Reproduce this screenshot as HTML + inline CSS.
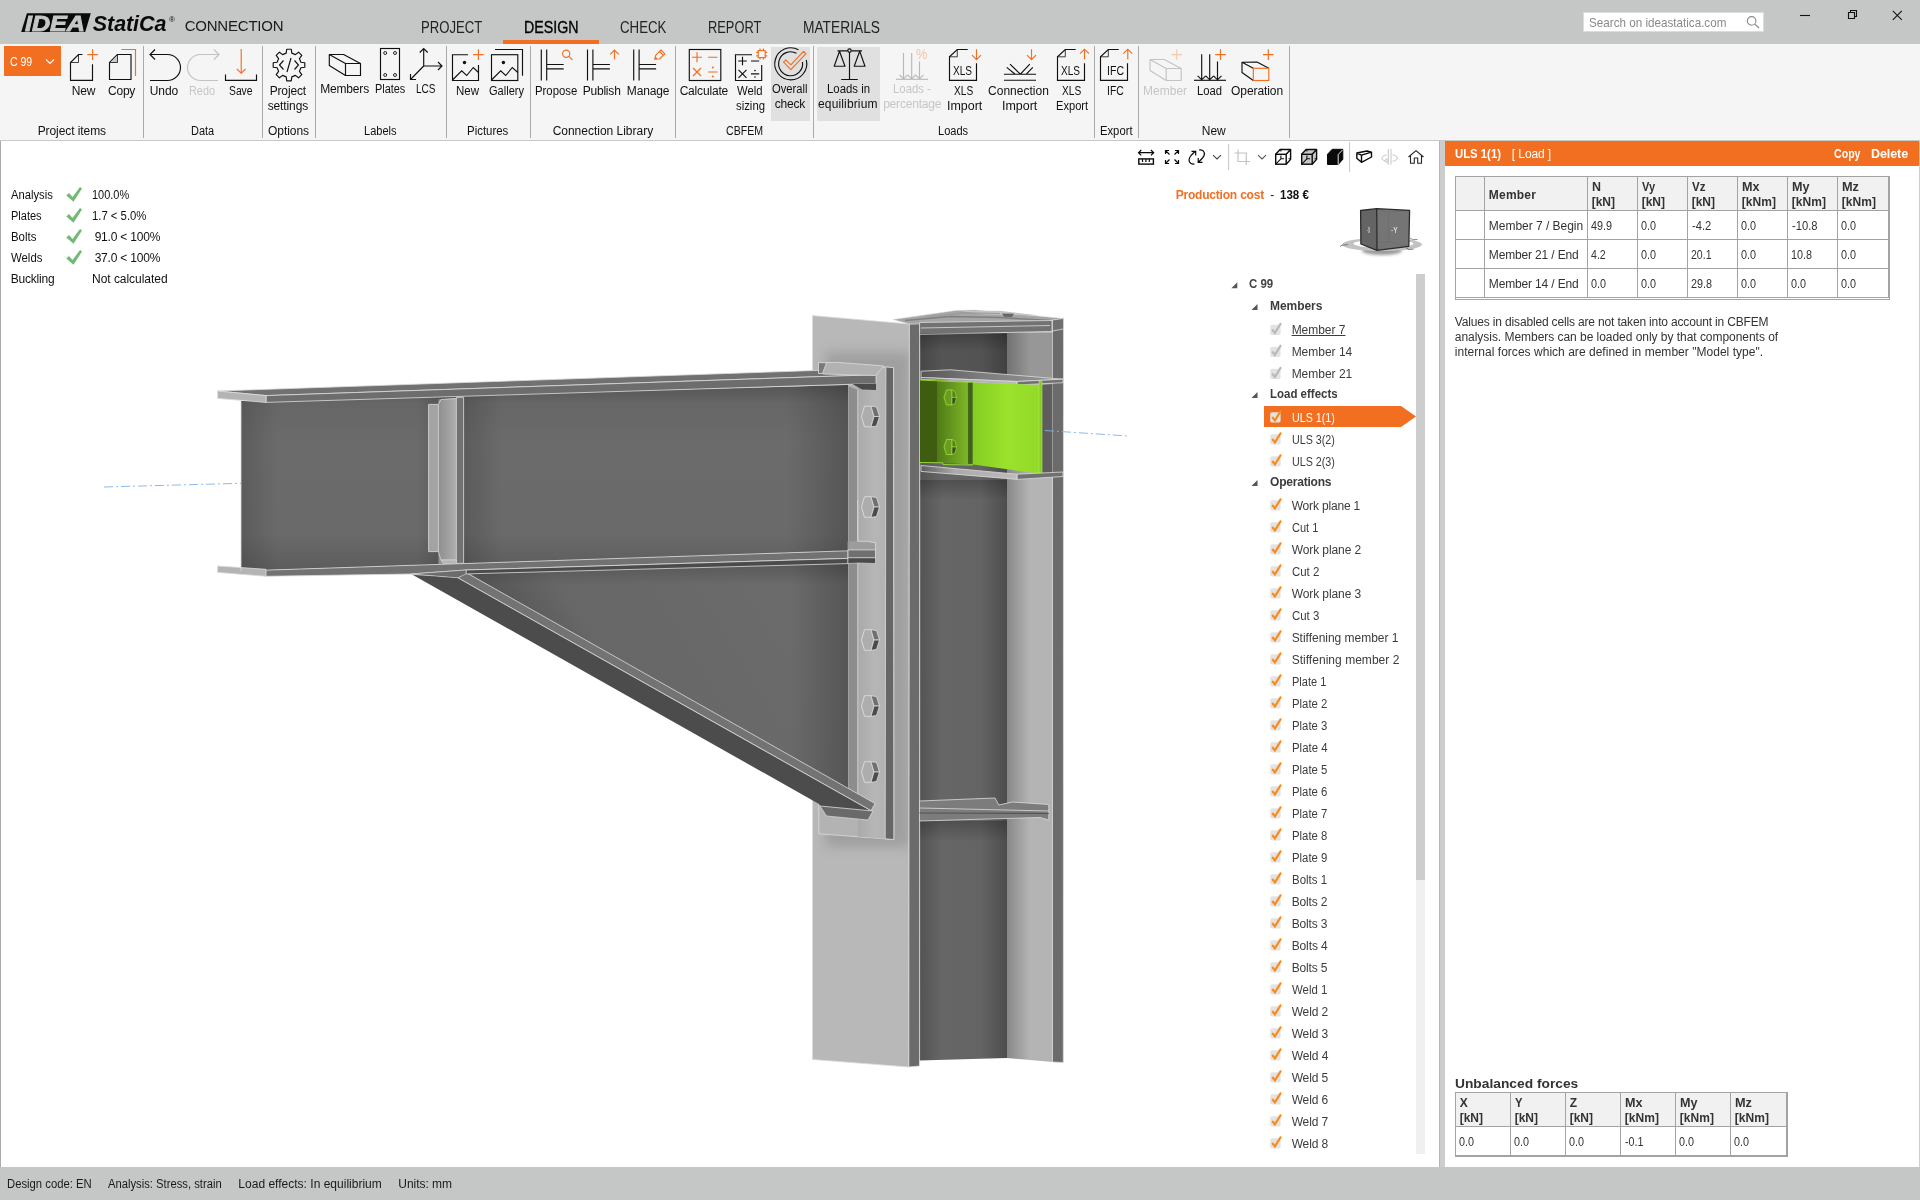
<!DOCTYPE html><html lang="en"><head><meta charset="utf-8"><title>IDEA StatiCa Connection</title><style>
*{box-sizing:border-box}
html,body{margin:0;padding:0}
body{width:1920px;height:1200px;overflow:hidden;position:relative;background:#fff;font-family:"Liberation Sans",sans-serif;font-size:12px;color:#1a1a1a}
.t{position:absolute;white-space:pre;display:block}
.abs{position:absolute}
.sep{position:absolute;width:1px;background:#a9a9a9;top:46px;height:92px}
svg{position:absolute;overflow:visible}
#app{position:absolute;left:0;top:0;width:1920px;height:1200px;overflow:hidden;will-change:transform}
</style></head><body><div id="app">
<div class="abs" style="left:0;top:0;width:1920px;height:44px;background:#c5c7c6"></div>
<svg style="left:0;top:0" width="300" height="44" viewBox="0 0 300 44"><polygon points="26.9,13.2 90.8,13.2 85.2,32 21.2,32" fill="#0a0a0a"/></svg>
<span class="t" style="left:25.32px;top:11.00px;font-size:21.5px;line-height:27px;transform:scaleX(1.1681);transform-origin:0 0;font-weight:700;color:#c5c7c6;font-style:italic;-webkit-text-stroke:0.9px #c5c7c6;">IDEA</span>
<span class="t" style="left:92.82px;top:11.00px;font-size:21.5px;line-height:27px;letter-spacing:-0.082px;font-weight:700;color:#0a0a0a;font-style:italic;">StatiCa</span>
<span class="t" style="left:169.06px;top:15.00px;font-size:8px;line-height:10px;color:#0a0a0a;">®</span>
<span class="t" style="left:184.68px;top:16.00px;font-size:15px;line-height:19px;letter-spacing:-0.213px;">CONNECTION</span>
<span class="t" style="left:420.62px;top:18.00px;font-size:16px;line-height:20px;transform:scaleX(0.8209);transform-origin:0 0;color:#222;">PROJECT</span>
<span class="t" style="left:523.52px;top:18.00px;font-size:16px;line-height:20px;transform:scaleX(0.8884);transform-origin:0 0;color:#000;-webkit-text-stroke:0.35px #000;">DESIGN</span>
<span class="t" style="left:619.62px;top:18.00px;font-size:16px;line-height:20px;transform:scaleX(0.8285);transform-origin:0 0;color:#222;">CHECK</span>
<span class="t" style="left:708.12px;top:18.00px;font-size:16px;line-height:20px;transform:scaleX(0.8024);transform-origin:0 0;color:#222;">REPORT</span>
<span class="t" style="left:803.42px;top:18.00px;font-size:16px;line-height:20px;transform:scaleX(0.8601);transform-origin:0 0;color:#222;">MATERIALS</span>
<div class="abs" style="left:503px;top:40px;width:96px;height:4px;background:#f26e21"></div>
<div class="abs" style="left:1583px;top:12px;width:181px;height:20px;background:#fff;border:1px solid #dcdcdc"></div>
<span class="t" style="left:1588.59px;top:15.00px;font-size:13px;line-height:16px;transform:scaleX(0.8969);transform-origin:0 0;color:#8a8a8a;">Search on ideastatica.com</span>
<svg style="left:1745px;top:14px" width="16" height="16" viewBox="0 0 16 16"><circle cx="6.6" cy="6.9" r="4.3" fill="none" stroke="#8a8a8a" stroke-width="1.1"/><path d="M9.8 10.1 L14 14" stroke="#8a8a8a" stroke-width="1.2" fill="none"/></svg>
<svg style="left:1790px;top:0" width="130" height="44" viewBox="0 0 130 44"><g stroke="#111" stroke-width="1.1" fill="none"><path d="M10 15.5H20"/><path d="M58.5 12.5h6v6h-6z M60.5 12.5v-2h6v6h-2"/><path d="M102.8 10.8l9 9M111.8 10.8l-9 9"/></g></svg>
<div class="abs" style="left:0;top:44px;width:1920px;height:97px;background:#f5f5f5;border-bottom:1px solid #c9c9c9"></div>
<div class="abs" style="left:771px;top:47px;width:39px;height:74px;background:#e0e0e0"></div>
<div class="abs" style="left:817px;top:47px;width:63px;height:74px;background:#e0e0e0"></div>
<div class="sep" style="left:143px"></div>
<div class="sep" style="left:262px"></div>
<div class="sep" style="left:315px"></div>
<div class="sep" style="left:446px"></div>
<div class="sep" style="left:530px"></div>
<div class="sep" style="left:675px"></div>
<div class="sep" style="left:813px"></div>
<div class="sep" style="left:1094px"></div>
<div class="sep" style="left:1138px"></div>
<div class="sep" style="left:1289px"></div>
<div class="abs" style="left:4px;top:46px;width:57px;height:30px;background:#f26e21"></div>
<span class="t" style="left:9.94px;top:55.00px;font-size:12px;line-height:15px;transform:scaleX(0.8758);transform-origin:0 0;color:#fff;">C 99</span>
<svg style="left:0;top:0" width="1300" height="141" viewBox="0 0 1300 141" fill="none" stroke-width="1.15"><path d="M46 59.5l4 4l4 -4" stroke="#fff"/><path d="M82.5 54.5H78.5L70.5 62.5V80.4H92.5V64.3" stroke="#111"/><path d="M78.5 54.5V62.5H70.5" stroke="#111" stroke-width="0.8"/><path d="M87.3 54.6H97.9M92.6 49.3V59.9" stroke="#f26e21"/><path d="M117.5 54.5L109.5 62.5V79.5H131V54.5Z" stroke="#111"/><path d="M117.5 54.5V62.5H109.5Z" stroke="#111" fill="#c8c8c8" stroke-width="0.8"/><path d="M121.5 49.5H135.5V76" stroke="#f26e21"/><path d="M150 54.5H167.5A13 13 0 0 1 167.5 80.5H150M155 49.5L150 54.5L155 59.5" stroke="#111"/><path d="M219 54.5H200.5A13 13 0 0 0 200.5 80.5H218M214 49.5L219 54.5L214 59.5" stroke="#c3c3c3"/><path d="M225.5 74.5V80.3H256.5V74.5" stroke="#111"/><path d="M241.2 49.0V73.3M236.9 69.0L241.2 73.3L245.5 69.0" stroke="#f26e21"/><path d="M286.2 53.1L286.7 49.2L291.3 49.2L291.8 53.1L295.4 54.6L298.6 52.2L301.8 55.4L299.4 58.6L300.9 62.2L304.8 62.7L304.8 67.3L300.9 67.8L299.4 71.4L301.8 74.6L298.6 77.8L295.4 75.4L291.8 76.9L291.3 80.8L286.7 80.8L286.2 76.9L282.6 75.4L279.4 77.8L276.2 74.6L278.6 71.4L277.1 67.8L273.2 67.3L273.2 62.7L277.1 62.2L278.6 58.6L276.2 55.4L279.4 52.2L282.6 54.6Z" stroke="#111" stroke-linejoin="round"/><path d="M283.5 60.5L279.5 65L283.5 69.5M294.5 60.5L298.5 65L294.5 69.5M291 58L287 72" stroke="#111"/><path d="M329.3 54.5H343.6L360.5 63.5H345.5ZM329.3 54.5V65.5L345.5 75.5" stroke="#111" stroke-linejoin="round"/><path d="M345.5 63.5V75.5H360.5V63.5" stroke="#111" stroke-linejoin="round"/><rect x="380.5" y="48.5" width="19" height="31" stroke="#111"/><circle cx="385.2" cy="53.0" r="1.5" stroke="#111" stroke-width="0.9"/><circle cx="395.0" cy="53.0" r="1.5" stroke="#111" stroke-width="0.9"/><circle cx="385.2" cy="75.0" r="1.5" stroke="#111" stroke-width="0.9"/><circle cx="395.0" cy="75.0" r="1.5" stroke="#111" stroke-width="0.9"/><path d="M423.7 66V48.5M419.7 52.5L423.7 48.5L427.7 52.5M423.7 66H442M438 62L442 66L438 70M423.7 66L410.5 79.5M410.5 74V79.5H416" stroke="#111"/><path d="M468 54.7H452.5V80.5H478.5V65" stroke="#111"/><circle cx="464.5" cy="62.5" r="1.7" fill="#111" stroke="none"/><path d="M452.5 80L461.7 70.8L466.7 75.5L473.3 67.5L478.5 72.5" stroke="#111"/><path d="M473.1 54.6H483.7M478.4 49.3V59.9" stroke="#f26e21"/><rect x="491.5" y="54.7" width="26.3" height="25.8" stroke="#111"/><path d="M495 49.5H522.5V75.8" stroke="#111"/><circle cx="503.4" cy="62.5" r="1.7" fill="#111" stroke="none"/><path d="M491.5 80L500.7 70.8L505.7 75.5L512.3 67.5L517.8 72.5" stroke="#111"/><path d="M541.3 49.5V80.5M546.7 49.5V80.5M546.7 64.5H563.7M546.7 68.8H563.7" stroke="#111"/><path d="M587.5 49.5V80.5M592.9 49.5V80.5M592.9 64.5H609.9M592.9 68.8H609.9" stroke="#111"/><path d="M633.7 49.5V80.5M639.1 49.5V80.5M639.1 64.5H656.1M639.1 68.8H656.1" stroke="#111"/><circle cx="566.2" cy="53.7" r="3.6" stroke="#f26e21"/><path d="M568.8 56.3L572.5 59.8" stroke="#f26e21"/><path d="M614.5 59.3V50.0M610.2 54.3L614.5 50.0L618.8 54.3" stroke="#f26e21"/><path d="M654.7 59.3L655.8 55.2L661 50L664.8 53.8L659.6 59L654.7 59.3ZM659.5 51.5L663.3 55.3" stroke="#f26e21" stroke-linejoin="round"/><path d="M654.7 59.3L655.5 56.5L657.8 58.8Z" fill="#f26e21" stroke="none"/><rect x="689.3" y="49.5" width="31.5" height="31" stroke="#111"/><path d="M692 57.2H702M697 52.2V62.2M708.1 57.2H717.5M693 68L701 76M701 68L693 76M708.1 72H717.5" stroke="#f26e21"/><circle cx="712.8" cy="67.6" r="1" fill="#f26e21" stroke="none"/><circle cx="712.8" cy="76.4" r="1" fill="#f26e21" stroke="none"/><path d="M752 54.7H735.5V80.5H761.7V65" stroke="#111"/><path d="M738.2 61H746.8M742.5 56.7V65.3M751 61H759.2M738.5 69.8L746.5 77.8M746.5 69.8L738.5 77.8M751 73.8H759.2" stroke="#111"/><circle cx="755" cy="70.6" r="0.8" fill="#111" stroke="none"/><circle cx="755" cy="77" r="0.8" fill="#111" stroke="none"/><rect x="758.2" y="50.6" width="7" height="7" stroke="#f26e21"/><path d="M760 50.6V48.6M763.4 50.6V48.6M760 57.6V59.6M763.4 57.6V59.6M758.2 52.4H756.2M758.2 55.8H756.2M765.2 52.4H767.2M765.2 55.8H767.2" stroke="#f26e21"/><path d="M798.5 49.8A16 16 0 1 0 806.3 60" stroke="#111"/><path d="M796.5 53.3A12 12 0 1 0 802.5 62" stroke="#111"/><path d="M783.5 62.2L785.8 59.9L790.8 64.9L803.5 51.3L806 53.6L790.9 69.6Z" stroke="#f26e21" stroke-linejoin="round"/><path d="M849.5 52.3V79.5M841.2 79.5H857.8M837.5 50.8H847.8M851.2 50.8H862M839.5 51.3L834.2 66.2H845L839.5 51.3M859.7 51.3L854.2 66.2H865L859.7 51.3" stroke="#111" stroke-linejoin="round"/><circle cx="849.5" cy="50.6" r="1.7" stroke="#111"/><path d="M896 79.3H928" stroke="#b8b8b8"/><path d="M903.5 53.1V78.8M899.5 74.8L903.5 78.8L907.5 74.8" stroke="#b8b8b8"/><path d="M911.7 53.1V78.8M907.7 74.8L911.7 78.8L915.7 74.8" stroke="#b8b8b8"/><path d="M919.5 61.6V78.8M915.5 74.8L919.5 78.8L923.5 74.8" stroke="#b8b8b8"/><path d="M967.7 49.5H957.3L949.5 56.8V80.3H976.5V63.3" stroke="#111"/><path d="M957.3 49.5V56.8H949.5" stroke="#111" stroke-width="0.8"/><path d="M976.5 49.2V59.6M972.0 55.1L976.5 59.6L981.0 55.1" stroke="#f26e21"/><path d="M1075.7 49.5H1065.3L1057.5 56.8V80.3H1084.5V63.3" stroke="#111"/><path d="M1065.3 49.5V56.8H1057.5" stroke="#111" stroke-width="0.8"/><path d="M1084.5 59.6V49.2M1080.0 53.7L1084.5 49.2L1089.0 53.7" stroke="#f26e21"/><path d="M1118.7 49.5H1108.3L1100.5 56.8V80.3H1127.5V63.3" stroke="#111"/><path d="M1108.3 49.5V56.8H1100.5" stroke="#111" stroke-width="0.8"/><path d="M1127.8 59.6V49.2M1123.3 53.7L1127.8 49.2L1132.3 53.7" stroke="#f26e21"/><path d="M1004 74.2H1036M1004 80.2H1036M1010 64.2L1020.4 74.2L1029.8 64.2M1006.7 67.4L1015.2 74.2M1032.8 67.4L1026.3 74.2" stroke="#111"/><path d="M1031.5 49.2V59.6M1027.0 55.1L1031.5 59.6L1036.0 55.1" stroke="#f26e21"/><path d="M1150.0 59.5H1164.3L1181.2 68.5H1166.2ZM1150.0 59.5V70.5L1166.2 80.5" stroke="#c3c3c3" stroke-linejoin="round"/><path d="M1166.2 68.5V80.5H1181.2V68.5" stroke="#c3c3c3" stroke-linejoin="round"/><path d="M1171.4 54.6H1182.0M1176.7 49.3V59.9" stroke="#f7c9ad"/><path d="M1194 80.3H1226" stroke="#111"/><path d="M1201.7 54.2V79.8M1197.7 75.8L1201.7 79.8L1205.7 75.8" stroke="#111"/><path d="M1209.7 54.2V79.8M1205.7 75.8L1209.7 79.8L1213.7 75.8" stroke="#111"/><path d="M1217.5 61.5V79.8M1213.5 75.8L1217.5 79.8L1221.5 75.8" stroke="#111"/><path d="M1215.2 54.6H1225.8M1220.5 49.3V59.9" stroke="#f26e21"/><path d="M1253.3 68.3L1242 62.3V72.5L1253.3 80.5M1242 62.3L1257 62L1268.8 68.3" stroke="#111" stroke-linejoin="round"/><rect x="1253.3" y="68.3" width="15.5" height="12.2" stroke="#f26e21"/><path d="M1263.0 54.6H1273.6M1268.3 49.3V59.9" stroke="#f26e21"/></svg>
<span class="t" style="left:915.80px;top:45.00px;font-size:14.5px;line-height:18px;transform:scaleX(0.8842);transform-origin:0 0;color:#f6c4a6;">%</span>
<span class="t" style="left:952.86px;top:62.00px;font-size:13.5px;line-height:17px;transform:scaleX(0.7446);transform-origin:0 0;color:#111;">XLS</span>
<span class="t" style="left:1060.86px;top:62.00px;font-size:13.5px;line-height:17px;transform:scaleX(0.7446);transform-origin:0 0;color:#111;">XLS</span>
<span class="t" style="left:1106.76px;top:62.00px;font-size:13.5px;line-height:17px;transform:scaleX(0.7817);transform-origin:0 0;color:#111;">IFC</span>
<span class="t" style="left:71.84px;top:84.00px;font-size:12px;line-height:15px;letter-spacing:-0.235px;color:#111;">New</span>
<span class="t" style="left:108.04px;top:84.00px;font-size:12px;line-height:15px;letter-spacing:-0.228px;color:#111;">Copy</span>
<span class="t" style="left:149.84px;top:84.00px;font-size:12px;line-height:15px;letter-spacing:-0.122px;color:#111;">Undo</span>
<span class="t" style="left:228.84px;top:84.00px;font-size:12px;line-height:15px;transform:scaleX(0.8592);transform-origin:0 0;color:#111;">Save</span>
<span class="t" style="left:269.64px;top:84.00px;font-size:12px;line-height:15px;letter-spacing:-0.135px;color:#111;">Project</span>
<span class="t" style="left:267.64px;top:99.00px;font-size:12px;line-height:15px;letter-spacing:-0.107px;color:#111;">settings</span>
<span class="t" style="left:320.14px;top:82.00px;font-size:12px;line-height:15px;letter-spacing:-0.159px;color:#111;">Members</span>
<span class="t" style="left:374.84px;top:82.00px;font-size:12px;line-height:15px;transform:scaleX(0.9085);transform-origin:0 0;color:#111;">Plates</span>
<span class="t" style="left:415.64px;top:82.00px;font-size:12px;line-height:15px;transform:scaleX(0.8353);transform-origin:0 0;color:#111;">LCS</span>
<span class="t" style="left:456.04px;top:84.00px;font-size:12px;line-height:15px;transform:scaleX(0.9581);transform-origin:0 0;color:#111;">New</span>
<span class="t" style="left:489.04px;top:84.00px;font-size:12px;line-height:15px;transform:scaleX(0.9208);transform-origin:0 0;color:#111;">Gallery</span>
<span class="t" style="left:534.84px;top:84.00px;font-size:12px;line-height:15px;transform:scaleX(0.9464);transform-origin:0 0;color:#111;">Propose</span>
<span class="t" style="left:582.64px;top:84.00px;font-size:12px;line-height:15px;letter-spacing:-0.194px;color:#111;">Publish</span>
<span class="t" style="left:626.84px;top:84.00px;font-size:12px;line-height:15px;letter-spacing:-0.144px;color:#111;">Manage</span>
<span class="t" style="left:679.64px;top:84.00px;font-size:12px;line-height:15px;letter-spacing:-0.181px;color:#111;">Calculate</span>
<span class="t" style="left:736.84px;top:84.00px;font-size:12px;line-height:15px;transform:scaleX(0.9437);transform-origin:0 0;color:#111;">Weld</span>
<span class="t" style="left:735.64px;top:99.00px;font-size:12px;line-height:15px;transform:scaleX(0.9453);transform-origin:0 0;color:#111;">sizing</span>
<span class="t" style="left:772.14px;top:82.00px;font-size:12px;line-height:15px;transform:scaleX(0.9340);transform-origin:0 0;color:#111;">Overall</span>
<span class="t" style="left:774.84px;top:97.00px;font-size:12px;line-height:15px;letter-spacing:-0.210px;color:#111;">check</span>
<span class="t" style="left:826.84px;top:82.00px;font-size:12px;line-height:15px;transform:scaleX(0.9478);transform-origin:0 0;color:#111;">Loads in</span>
<span class="t" style="left:818.04px;top:97.00px;font-size:12px;line-height:15px;letter-spacing:0.143px;color:#111;">equilibrium</span>
<span class="t" style="left:954.34px;top:84.00px;font-size:12px;line-height:15px;transform:scaleX(0.8465);transform-origin:0 0;color:#111;">XLS</span>
<span class="t" style="left:946.84px;top:99.00px;font-size:12px;line-height:15px;transform:scaleX(1.0380);transform-origin:0 0;color:#111;">Import</span>
<span class="t" style="left:988.04px;top:84.00px;font-size:12px;line-height:15px;letter-spacing:0.009px;color:#111;">Connection</span>
<span class="t" style="left:1001.84px;top:99.00px;font-size:12px;line-height:15px;transform:scaleX(1.0380);transform-origin:0 0;color:#111;">Import</span>
<span class="t" style="left:1062.34px;top:84.00px;font-size:12px;line-height:15px;transform:scaleX(0.8465);transform-origin:0 0;color:#111;">XLS</span>
<span class="t" style="left:1056.04px;top:99.00px;font-size:12px;line-height:15px;transform:scaleX(0.9256);transform-origin:0 0;color:#111;">Export</span>
<span class="t" style="left:1106.84px;top:84.00px;font-size:12px;line-height:15px;transform:scaleX(0.8639);transform-origin:0 0;color:#111;">IFC</span>
<span class="t" style="left:1196.84px;top:84.00px;font-size:12px;line-height:15px;transform:scaleX(0.9365);transform-origin:0 0;color:#111;">Load</span>
<span class="t" style="left:1231.04px;top:84.00px;font-size:12px;line-height:15px;letter-spacing:-0.078px;color:#111;">Operation</span>
<span class="t" style="left:37.64px;top:124.00px;font-size:12px;line-height:15px;letter-spacing:-0.073px;color:#111;">Project items</span>
<span class="t" style="left:190.64px;top:124.00px;font-size:12px;line-height:15px;transform:scaleX(0.9153);transform-origin:0 0;color:#111;">Data</span>
<span class="t" style="left:268.04px;top:124.00px;font-size:12px;line-height:15px;letter-spacing:-0.051px;color:#111;">Options</span>
<span class="t" style="left:363.54px;top:124.00px;font-size:12px;line-height:15px;transform:scaleX(0.9191);transform-origin:0 0;color:#111;">Labels</span>
<span class="t" style="left:466.84px;top:124.00px;font-size:12px;line-height:15px;transform:scaleX(0.9528);transform-origin:0 0;color:#111;">Pictures</span>
<span class="t" style="left:552.64px;top:124.00px;font-size:12px;line-height:15px;letter-spacing:-0.012px;color:#111;">Connection Library</span>
<span class="t" style="left:726.04px;top:124.00px;font-size:12px;line-height:15px;transform:scaleX(0.8810);transform-origin:0 0;color:#111;">CBFEM</span>
<span class="t" style="left:938.04px;top:124.00px;font-size:12px;line-height:15px;transform:scaleX(0.9206);transform-origin:0 0;color:#111;">Loads</span>
<span class="t" style="left:1099.64px;top:124.00px;font-size:12px;line-height:15px;transform:scaleX(0.9371);transform-origin:0 0;color:#111;">Export</span>
<span class="t" style="left:1201.84px;top:124.00px;font-size:12px;line-height:15px;letter-spacing:-0.102px;color:#111;">New</span>
<span class="t" style="left:188.84px;top:84.00px;font-size:12px;line-height:15px;transform:scaleX(0.9063);transform-origin:0 0;color:#c6c6c6;">Redo</span>
<span class="t" style="left:892.64px;top:82.00px;font-size:12px;line-height:15px;transform:scaleX(0.9469);transform-origin:0 0;color:#c6c6c6;">Loads -</span>
<span class="t" style="left:883.14px;top:97.00px;font-size:12px;line-height:15px;letter-spacing:-0.185px;color:#c6c6c6;">percentage</span>
<span class="t" style="left:1143.04px;top:84.00px;font-size:12px;line-height:15px;letter-spacing:0.015px;color:#c6c6c6;">Member</span>
<div class="abs" style="left:0;top:141px;width:1439px;height:1026px;background:#fff;border-left:1px solid #ababab"></div>
<div class="abs" style="left:1439px;top:141px;width:481px;height:1026px;background:#cdcdcd;border-left:1px solid #b6b6b6"></div>
<span class="t" style="left:10.64px;top:188.00px;font-size:12px;line-height:15px;transform:scaleX(0.9355);transform-origin:0 0;color:#111;">Analysis</span>
<span class="t" style="left:92.04px;top:188.00px;font-size:12px;line-height:15px;transform:scaleX(0.9140);transform-origin:0 0;color:#111;">100.0%</span>
<span class="t" style="left:10.64px;top:209.00px;font-size:12px;line-height:15px;transform:scaleX(0.9175);transform-origin:0 0;color:#111;">Plates</span>
<span class="t" style="left:92.04px;top:209.00px;font-size:12px;line-height:15px;transform:scaleX(0.9427);transform-origin:0 0;color:#111;">1.7 &lt; 5.0%</span>
<span class="t" style="left:10.64px;top:230.00px;font-size:12px;line-height:15px;transform:scaleX(0.9521);transform-origin:0 0;color:#111;">Bolts</span>
<span class="t" style="left:94.64px;top:230.00px;font-size:12px;line-height:15px;letter-spacing:-0.193px;color:#111;">91.0 &lt; 100%</span>
<span class="t" style="left:10.64px;top:251.00px;font-size:12px;line-height:15px;transform:scaleX(0.9478);transform-origin:0 0;color:#111;">Welds</span>
<span class="t" style="left:94.64px;top:251.00px;font-size:12px;line-height:15px;letter-spacing:-0.193px;color:#111;">37.0 &lt; 100%</span>
<span class="t" style="left:10.64px;top:272.00px;font-size:12px;line-height:15px;letter-spacing:-0.182px;color:#111;">Buckling</span>
<span class="t" style="left:92.04px;top:272.00px;font-size:12px;line-height:15px;letter-spacing:-0.039px;color:#111;">Not calculated</span>
<svg style="left:0;top:0" width="200" height="300" viewBox="0 0 200 300"><path d="M66.3 195.5L69 193.0L72.5 197.0L80 187.0L82 188.5L73.5 201.8Z" fill="#72b974"/><path d="M66.3 216.5L69 214.0L72.5 218.0L80 208.0L82 209.5L73.5 222.8Z" fill="#72b974"/><path d="M66.3 237.5L69 235.0L72.5 239.0L80 229.0L82 230.5L73.5 243.8Z" fill="#72b974"/><path d="M66.3 258.5L69 256.0L72.5 260.0L80 250.0L82 251.5L73.5 264.8Z" fill="#72b974"/></svg>
<svg style="left:0;top:0" width="1440" height="180" viewBox="0 0 1440 180" fill="none"><path d="M1138.5 152.7H1153.7M1141.3 150L1138.5 152.7L1141.3 155.4M1150.9 150L1153.7 152.7L1150.9 155.4" stroke="#0a0a0a" stroke-width="1.2"/><rect x="1138.8" y="158.9" width="14.6" height="5.2" stroke="#0a0a0a" stroke-width="1.4"/><path d="M1142.5 159V162M1145.9 159V162M1149.3 159V162" stroke="#0a0a0a" stroke-width="1.2"/><path d="M1169.5 154.5L1165.5 150.5M1169.1 150.5L1165.5 150.5L1165.5 154.1" stroke="#0a0a0a" stroke-width="1.2"/><path d="M1174.5 154.5L1178.5 150.5M1174.9 150.5L1178.5 150.5L1178.5 154.1" stroke="#0a0a0a" stroke-width="1.2"/><path d="M1169.5 159.5L1165.5 163.5M1169.1 163.5L1165.5 163.5L1165.5 159.9" stroke="#0a0a0a" stroke-width="1.2"/><path d="M1174.5 159.5L1178.5 163.5M1174.9 163.5L1178.5 163.5L1178.5 159.9" stroke="#0a0a0a" stroke-width="1.2"/><path d="M1194.5 164C1189 164.5 1187.5 160 1191 155.5L1195.5 151M1191.5 151.3H1195.7V155.5" stroke="#0a0a0a" stroke-width="1.2"/><path d="M1199 150C1204.5 149 1206 154 1202.5 158L1198.2 162.5M1202.5 162.3H1198.2V158" stroke="#0a0a0a" stroke-width="1.2"/><path d="M1213 155.2L1217 159L1221 155.2" stroke="#444" stroke-width="1.1"/><path d="M1228.6 144V170M1349.6 142V172" stroke="#c8c8c8" stroke-width="1"/><path d="M1238 149.5V161.5H1249.8M1234.6 153H1246.3V165" stroke="#c4c4c4" stroke-width="1.2"/><path d="M1258 155.2L1262 159L1266 155.2" stroke="#555" stroke-width="1.1"/><rect x="1275.7" y="154.3" width="10.5" height="9.9" fill="none" stroke="#0a0a0a" stroke-width="1.4"/><path d="M1275.7 154.3L1280.1 149.5H1290.6V159.4L1286.2 164.2M1286.2 154.3L1290.6 149.5" stroke="#0a0a0a" stroke-width="1.4" stroke-linejoin="round"/><path d="M1275.7 164.2L1280.9 158.8M1280.9 158.8V155.4M1280.9 158.8H1284.1" stroke="#0a0a0a" stroke-width="1.1"/><path d="M1280.9 149.5V151.5M1290.6 158.8H1288.6" stroke="#0a0a0a" stroke-width="1.1"/><path d="M1301.7 154.3L1306.1 149.5H1316.6V159.4L1312.2 164.2V154.3Z" fill="#c9c9c9" stroke="none"/><rect x="1301.7" y="154.3" width="10.5" height="9.9" fill="#c9c9c9" stroke="#0a0a0a" stroke-width="1.4"/><path d="M1301.7 154.3L1306.1 149.5H1316.6V159.4L1312.2 164.2M1312.2 154.3L1316.6 149.5" stroke="#0a0a0a" stroke-width="1.4" stroke-linejoin="round"/><path d="M1301.7 164.2L1306.9 158.8M1306.9 158.8V155.4M1306.9 158.8H1310.1" stroke="#0a0a0a" stroke-width="1.1"/><path d="M1306.9 149.5V151.5M1316.6 158.8H1314.6" stroke="#0a0a0a" stroke-width="1.1"/><path d="M1327.5 154.3L1332.2 149.3H1342.8V159.3L1338.2 164.5H1327.5Z" fill="#0a0a0a" stroke="#0a0a0a" stroke-width="1"/><path d="M1338.2 154.6V164.5M1338.2 154.6L1342.6 149.8" stroke="#fff" stroke-width="0.9"/><path d="M1356.8 153L1367 151L1371.5 152.2L1361.5 155.2ZM1356.8 153V158.3L1361.5 162.3V155.2M1361.5 162.3L1371.5 157V152.2" stroke="#0a0a0a" stroke-width="1.4" stroke-linejoin="round"/><path d="M1388.3 149V164.7M1391 149V164.7" stroke="#c4c4c4" stroke-width="1"/><path d="M1392.5 155C1399 155.5 1399 160.5 1392.5 161.2M1386.5 155C1380.5 156 1381 160 1385 160.8M1387 158.8L1384.3 160.8L1387 162.8Z" stroke="#c4c4c4" stroke-width="1"/><path d="M1408.5 157L1416 150.6L1423.5 157M1410.5 155.5V163.3H1414.3V158H1417.7V163.3H1421.5V155.5" stroke="#222" stroke-width="1.1" stroke-linejoin="round"/></svg>
<span class="t" style="left:1175.64px;top:188.00px;font-size:12px;line-height:15px;letter-spacing:-0.196px;font-weight:700;color:#f26e21;">Production cost</span>
<span class="t" style="left:1270.14px;top:188.00px;font-size:12px;line-height:15px;color:#111;">-</span>
<span class="t" style="left:1279.64px;top:188.00px;font-size:12px;line-height:15px;transform:scaleX(0.9624);transform-origin:0 0;font-weight:700;color:#111;">138 €</span>
<svg style="left:0;top:0" width="1440" height="270" viewBox="0 0 1440 270"><defs><filter id="blr" x="-30%" y="-60%" width="160%" height="220%"><feGaussianBlur stdDeviation="1.6"/></filter></defs>
<ellipse cx="1382" cy="250.5" rx="20" ry="4.5" fill="#9a9a9a" filter="url(#blr)"/>
<path d="M1342 244.5A40 6.6 0 1 0 1422 244.5A40 6.6 0 1 0 1342 244.5ZM1353.5 243.7A30 4.2 0 1 1 1413.5 243.7A30 4.2 0 1 1 1353.5 243.7Z" fill="#c2c2c2" fill-rule="evenodd"/>
<path d="M1340 246.5l2 -1.3l6 -0.6M1410 238l2.5 1.7l5 -0.2M1406 248l3 1.5l4.5 -0.3" stroke="#555" stroke-width="0.7" fill="none"/>
<polygon points="1360.6,210.5 1376.7,208.7 1377,250.4 1360.9,244" fill="#646464"/>
<polygon points="1376.7,208.7 1409.6,210.3 1408.8,246.3 1377,250.4" fill="#757575"/>
<path d="M1376.7 208.7L1388.5 212.5L1388.6 241.5L1377 250.4M1388.6 241.5L1408.8 246.3M1388.5 212.5L1409.6 210.3M1360.9 244L1388.6 241.5" stroke="#6c6c6c" stroke-width="0.6" fill="none"/>
<path d="M1360.6 210.5L1376.7 208.7L1409.6 210.3L1408.8 246.3L1377 250.4L1360.9 244ZM1376.7 208.7L1377 250.4" stroke="#2b2b2b" stroke-width="1.3" fill="none" stroke-linejoin="round"/></svg>
<span class="t" style="left:1390.78px;top:224.00px;font-size:9.5px;line-height:12px;transform:scaleX(0.6737);transform-origin:0 0;color:#fff;">-Y</span>
<span class="t" style="left:1366.51px;top:225.00px;font-size:9px;line-height:11px;transform:scaleX(0.3667);transform-origin:0 0;color:#eee;">-X</span>
<svg style="left:0;top:0" width="1440" height="1170" viewBox="0 0 1440 1170"><defs>
<linearGradient id="gWebV" x1="0" y1="0" x2="0" y2="1"><stop offset="0" stop-color="#555"/><stop offset="0.1" stop-color="#666"/><stop offset="0.3" stop-color="#6b6b6b"/><stop offset="0.8" stop-color="#6a6a6a"/><stop offset="1" stop-color="#5c5c5c"/></linearGradient>
<linearGradient id="gWebH" gradientUnits="userSpaceOnUse" x1="241" y1="0" x2="848" y2="0"><stop offset="0" stop-color="#000" stop-opacity="0.14"/><stop offset="0.06" stop-color="#000" stop-opacity="0"/><stop offset="0.29" stop-color="#000" stop-opacity="0"/><stop offset="0.335" stop-color="#000" stop-opacity="0.16"/><stop offset="0.37" stop-color="#000" stop-opacity="0.14"/><stop offset="0.43" stop-color="#000" stop-opacity="0"/><stop offset="0.9" stop-color="#000" stop-opacity="0"/><stop offset="1" stop-color="#000" stop-opacity="0.2"/></linearGradient>
<linearGradient id="gColWeb" gradientUnits="userSpaceOnUse" x1="920" y1="0" x2="1007" y2="0"><stop offset="0" stop-color="#545454"/><stop offset="0.25" stop-color="#666"/><stop offset="0.7" stop-color="#646464"/><stop offset="1" stop-color="#4d4d4d"/></linearGradient>
<linearGradient id="gColIn" gradientUnits="userSpaceOnUse" x1="1007" y1="0" x2="1053" y2="0"><stop offset="0" stop-color="#888"/><stop offset="0.5" stop-color="#b4b4b4"/><stop offset="1" stop-color="#b3b3b3"/></linearGradient>
<linearGradient id="gGreen" gradientUnits="userSpaceOnUse" x1="973" y1="0" x2="1040" y2="0"><stop offset="0" stop-color="#85cd22"/><stop offset="0.5" stop-color="#9ae22c"/><stop offset="1" stop-color="#92da28"/></linearGradient>
<linearGradient id="gGreen2" gradientUnits="userSpaceOnUse" x1="937" y1="0" x2="968" y2="0"><stop offset="0" stop-color="#4f7a16"/><stop offset="1" stop-color="#7cb726"/></linearGradient>
<linearGradient id="gHaunch" gradientUnits="userSpaceOnUse" x1="560" y1="700" x2="760" y2="580"><stop offset="0" stop-color="#575757"/><stop offset="0.25" stop-color="#676767"/><stop offset="1" stop-color="#6b6b6b"/></linearGradient>
<linearGradient id="gStf" gradientUnits="userSpaceOnUse" x1="438" y1="0" x2="457" y2="0"><stop offset="0" stop-color="#8e8e8e"/><stop offset="1" stop-color="#b0b0b0"/></linearGradient>
<linearGradient id="gPlate" gradientUnits="userSpaceOnUse" x1="857" y1="0" x2="886" y2="0"><stop offset="0" stop-color="#a9a9a9"/><stop offset="0.6" stop-color="#b6b6b6"/><stop offset="1" stop-color="#b2b2b2"/></linearGradient>
<filter id="b6" x="-20%" y="-20%" width="140%" height="140%"><feGaussianBlur stdDeviation="6"/></filter>
<filter id="b3" x="-20%" y="-20%" width="140%" height="140%"><feGaussianBlur stdDeviation="3"/></filter>
</defs><polygon points="812.5,315.6 909.4,324.0 908.8,1067.0 812.5,1059.5" fill="#b8b8b8" stroke="#dcdcdc" stroke-width="0.8" stroke-linejoin="round" /><g clip-path="url(#cpColL)"><rect x="826" y="352" width="84" height="495" fill="#7a7a7a" opacity="0.4" filter="url(#b6)"/></g><clipPath id="cpColL"><polygon points="812.5,315.6 909.4,324 908.8,1067 812.5,1059.5"/></clipPath><polygon points="909.4,324.0 919.6,323.6 919.5,1066.0 908.8,1067.0" fill="#6b6b6b" stroke="#dcdcdc" stroke-width="0.8" stroke-linejoin="round" /><polygon points="919.6,333.0 1007.0,333.0 1007.0,1058.0 919.5,1060.5" fill="url(#gColWeb)" stroke-linejoin="round" /><polygon points="1007.0,322.0 1052.5,320.0 1052.5,1062.0 1007.0,1058.0" fill="url(#gColIn)" stroke-linejoin="round" /><polygon points="1052.5,319.0 1063.5,318.4 1063.3,1062.5 1052.5,1062.0" fill="#6b6b6b" stroke="#dcdcdc" stroke-width="0.8" stroke-linejoin="round" /><polyline points="919.8,334.0 919.6,1066.0" fill="none" stroke="#dcdcdc" stroke-width="0.8" /><rect x="920" y="334" width="87" height="18" fill="url(#gSh)"/><rect x="920" y="386" width="87" height="18" fill="url(#gSh)"/><rect x="920" y="480" width="87" height="20" fill="url(#gSh)"/><rect x="920" y="821" width="87" height="21" fill="url(#gSh)"/><linearGradient id="gSh" x1="0" y1="0" x2="0" y2="1"><stop offset="0" stop-color="#000" stop-opacity="0.22"/><stop offset="1" stop-color="#000" stop-opacity="0"/></linearGradient><polygon points="893.0,319.6 956.0,310.4 975.0,310.0 1063.5,318.4 1052.5,320.5 1007.0,322.0 919.6,323.9 909.4,324.0" fill="#a6a6a6" stroke="#dcdcdc" stroke-width="0.5" stroke-linejoin="round" /><polygon points="960.0,311.0 1000.0,310.8 1040.0,315.5 985.0,314.5" fill="#c4c4c4" stroke-linejoin="round" /><polyline points="905.0,320.5 950.0,316.5 1000.0,317.5 1050.0,320.5" fill="none" stroke="#808080" stroke-width="1.6" /><polyline points="925.0,317.0 965.0,312.8 1000.0,313.5" fill="none" stroke="#9a9a9a" stroke-width="1.2" /><polygon points="1002.0,313.5 1014.0,313.8 1012.0,317.0 1004.0,316.8" fill="#666" stroke-linejoin="round" /><polygon points="919.6,322.5 1052.0,320.5 1052.0,331.4 919.6,334.5" fill="#727272" stroke="#dcdcdc" stroke-width="0.8" stroke-linejoin="round" /><polyline points="921.0,328.0 1050.0,325.5" fill="none" stroke="#dcdcdc" stroke-width="0.8" /><polygon points="1052.5,320.0 1063.5,318.4 1063.5,329.0 1052.5,331.0" fill="#707070" stroke="#dcdcdc" stroke-width="0.8" stroke-linejoin="round" /><rect x="920" y="333" width="132.5" height="46" fill="#000" opacity="0.16"/><linearGradient id="gSt1" gradientUnits="userSpaceOnUse" x1="921" y1="0" x2="1040" y2="0"><stop offset="0" stop-color="#565656"/><stop offset="0.5" stop-color="#7c7c7c"/><stop offset="1" stop-color="#8e8e8e"/></linearGradient><linearGradient id="gSt2" gradientUnits="userSpaceOnUse" x1="921" y1="0" x2="1017" y2="0"><stop offset="0" stop-color="#5c5c5c"/><stop offset="0.35" stop-color="#aaa"/><stop offset="1" stop-color="#bcbcbc"/></linearGradient><polygon points="921.0,371.2 950.6,369.8 1063.0,379.2 1017.2,381.5 921.0,377.5" fill="url(#gSt1)" stroke="#dcdcdc" stroke-width="0.8" stroke-linejoin="round" /><polygon points="921.0,377.5 1017.2,381.5 1017.2,385.0 921.0,379.3" fill="url(#gSt2)" stroke="#dcdcdc" stroke-width="0.8" stroke-linejoin="round" /><polygon points="1017.2,381.5 1063.0,379.2 1063.0,382.7 1017.2,385.0" fill="#707070" stroke="#dcdcdc" stroke-width="0.8" stroke-linejoin="round" /><polygon points="1039.0,385.0 1052.5,384.0 1052.5,473.0 1039.0,474.0" fill="#5e5e5e" stroke-linejoin="round" /><polygon points="920.0,380.0 937.0,380.0 937.0,462.0 920.0,462.0" fill="#3e5d11" stroke-linejoin="round" /><polygon points="937.0,380.0 967.6,382.0 967.6,464.4 937.0,462.0" fill="url(#gGreen2)" stroke-linejoin="round" /><polygon points="967.6,382.4 973.0,382.4 973.0,464.4 967.6,464.4" fill="#41621a" stroke="#8fd62c" stroke-width="0.6" stroke-linejoin="round" /><polygon points="973.0,382.4 1039.0,385.0 1039.0,473.6 973.0,464.4" fill="url(#gGreen)" stroke-linejoin="round" /><polygon points="1039.0,381.0 1042.0,381.5 1042.0,477.0 1039.0,476.5" fill="#86cc25" stroke="#b4ee4a" stroke-width="0.6" stroke-linejoin="round" /><polyline points="920.0,380.0 967.6,382.2" fill="none" stroke="#9be12b" stroke-width="0.9" /><polyline points="920.0,462.5 943.0,462.8 943.0,464.6 973.0,465.0" fill="none" stroke="#9be12b" stroke-width="0.9" /><polygon points="944.0,397.4 946.5,389.9 952.0,389.9 952.0,404.9 946.5,404.9" fill="#6a9c22" stroke="#a6e63c" stroke-width="0.7" stroke-linejoin="round" /><polygon points="952.0,389.9 955.0,391.4 956.5,397.4 952.0,397.4" fill="#55801b" stroke="#a6e63c" stroke-width="0.6" stroke-linejoin="round" /><polygon points="952.0,397.4 956.5,397.4 955.0,403.4 952.0,404.9" fill="#3a4f1c" stroke="#a6e63c" stroke-width="0.6" stroke-linejoin="round" /><polygon points="944.0,447.0 946.5,439.5 952.0,439.5 952.0,454.5 946.5,454.5" fill="#6a9c22" stroke="#a6e63c" stroke-width="0.7" stroke-linejoin="round" /><polygon points="952.0,439.5 955.0,441.0 956.5,447.0 952.0,447.0" fill="#55801b" stroke="#a6e63c" stroke-width="0.6" stroke-linejoin="round" /><polygon points="952.0,447.0 956.5,447.0 955.0,453.0 952.0,454.5" fill="#3a4f1c" stroke="#a6e63c" stroke-width="0.6" stroke-linejoin="round" /><polygon points="921.0,465.5 1017.2,474.2 1017.2,479.4 921.0,471.4" fill="url(#gSt2)" stroke="#dcdcdc" stroke-width="0.8" stroke-linejoin="round" /><polygon points="1017.2,474.2 1063.0,472.0 1063.0,476.5 1017.2,479.4" fill="#707070" stroke="#dcdcdc" stroke-width="0.8" stroke-linejoin="round" /><polygon points="919.5,801.0 995.0,798.0 998.8,805.0 1012.5,802.0 1048.8,804.5 1048.8,820.0 1040.0,817.5 919.5,821.0" fill="#7c7c7c" stroke="#dcdcdc" stroke-width="0.8" stroke-linejoin="round" /><polyline points="919.5,808.0 1048.8,811.0" fill="none" stroke="#dcdcdc" stroke-width="0.8" /><polyline points="919.5,813.0 1048.8,813.5" fill="none" stroke="#555" stroke-width="1.2" /><polygon points="818.8,362.4 893.6,367.6 893.8,839.5 818.8,833.8" fill="#b3b3b3" stroke="#dcdcdc" stroke-width="0.8" stroke-linejoin="round" /><polygon points="857.8,371.0 885.8,371.0 885.2,838.8 857.8,836.6" fill="url(#gPlate)" stroke-linejoin="round" /><polygon points="885.9,367.0 893.5,367.6 893.8,839.5 885.2,838.8" fill="#666" stroke="#dcdcdc" stroke-width="0.8" stroke-linejoin="round" /><polygon points="847.8,386.0 857.8,390.0 857.8,794.0 847.8,788.5" fill="#8d8d8d" stroke-linejoin="round" /><polyline points="847.8,386.0 847.8,788.0" fill="none" stroke="#dcdcdc" stroke-width="0.8" /><polyline points="857.8,390.0 857.8,794.0" fill="none" stroke="#dcdcdc" stroke-width="0.8" /><polygon points="462.0,571.0 848.0,558.0 848.0,797.0 466.0,572.5" fill="url(#gHaunch)" stroke-linejoin="round" /><linearGradient id="gHx" gradientUnits="userSpaceOnUse" x1="790" y1="0" x2="848" y2="0"><stop offset="0" stop-color="#000" stop-opacity="0"/><stop offset="1" stop-color="#000" stop-opacity="0.2"/></linearGradient><polygon points="790.0,560.0 848.0,558.0 848.0,797.0 790.0,755.0" fill="url(#gHx)" stroke-linejoin="round" /><linearGradient id="gHy" gradientUnits="userSpaceOnUse" x1="0" y1="560" x2="0" y2="585"><stop offset="0" stop-color="#000" stop-opacity="0.2"/><stop offset="1" stop-color="#000" stop-opacity="0"/></linearGradient><polygon points="470.0,573.0 848.0,560.0 848.0,590.0 500.0,592.0" fill="url(#gHy)" stroke-linejoin="round" /><polygon points="466.0,572.5 875.0,803.5 871.0,810.7 457.8,577.8" fill="#737373" stroke="#dcdcdc" stroke-width="0.8" stroke-linejoin="round" /><polygon points="411.2,574.0 457.8,577.8 871.0,810.7 868.0,820.0 826.5,816.0 819.0,804.0" fill="#4c4c4c" stroke-linejoin="round" /><polyline points="457.8,577.8 871.0,810.7" fill="none" stroke="#dcdcdc" stroke-width="0.8" /><polygon points="820.0,806.0 826.5,816.0 868.0,820.0 873.0,811.0" fill="#6a6a6a" stroke="#dcdcdc" stroke-width="0.8" stroke-linejoin="round" /><polyline points="413.0,574.5 460.0,576.5 466.0,572.5" fill="none" stroke="#dcdcdc" stroke-width="0.7" /><polygon points="241.0,401.0 848.0,385.0 848.0,551.0 241.0,571.0" fill="url(#gWebV)" stroke-linejoin="round" /><polygon points="241.0,401.0 848.0,385.0 848.0,551.0 241.0,571.0" fill="url(#gWebH)" stroke-linejoin="round" /><polygon points="217.6,391.0 876.0,368.4 876.0,374.7 266.0,395.6" fill="#717171" stroke="#dcdcdc" stroke-width="0.8" stroke-linejoin="round" /><polygon points="266.0,395.6 876.0,374.7 876.0,383.5 266.0,402.4" fill="#6d6d6d" stroke="#dcdcdc" stroke-width="0.8" stroke-linejoin="round" /><polygon points="217.6,391.0 266.0,395.6 266.0,402.4 217.6,398.4" fill="#b4b4b4" stroke="#dcdcdc" stroke-width="0.8" stroke-linejoin="round" /><polygon points="852.5,384.0 876.0,383.5 876.0,390.0 862.0,389.5" fill="#4a4a4a" stroke-linejoin="round" /><polygon points="241.0,571.0 848.0,550.8 848.0,558.4 466.0,570.0 411.0,574.0 266.0,576.3" fill="#727272" stroke="#dcdcdc" stroke-width="0.8" stroke-linejoin="round" /><polygon points="466.0,570.0 848.0,558.4 848.0,563.6 466.0,573.9" fill="#4b4b4b" stroke="#dcdcdc" stroke-width="0.8" stroke-linejoin="round" /><polygon points="411.0,574.0 466.0,570.0 466.0,573.9 457.8,577.8" fill="#6c6c6c" stroke="#dcdcdc" stroke-width="0.6" stroke-linejoin="round" /><polygon points="217.6,566.0 266.0,569.3 266.0,576.3 217.6,572.4" fill="#b4b4b4" stroke="#dcdcdc" stroke-width="0.8" stroke-linejoin="round" /><polyline points="241.0,401.5 241.0,571.0" fill="none" stroke="#dcdcdc" stroke-width="0.8" /><polygon points="847.6,541.3 857.8,541.3 866.8,541.3 875.5,542.8 875.5,549.9 847.6,549.9" fill="#9c9c9c" stroke-linejoin="round" /><polyline points="857.8,500.0 857.8,541.3 866.8,541.3 875.5,542.8 875.5,563.0" fill="none" stroke="#dcdcdc" stroke-width="0.8" /><polygon points="848.0,549.9 875.5,549.9 875.5,557.8 848.0,557.8" fill="#707070" stroke="#dcdcdc" stroke-width="0.8" stroke-linejoin="round" /><polygon points="848.0,557.8 875.5,557.8 875.5,563.5 858.0,563.0 848.0,563.6" fill="#4a4a4a" stroke="#dcdcdc" stroke-width="0.6" stroke-linejoin="round" /><polygon points="818.5,362.6 838.0,362.4 884.0,366.0 875.5,375.5 823.0,374.0" fill="#b2b2b2" stroke="#dcdcdc" stroke-width="0.8" stroke-linejoin="round" /><polygon points="818.5,362.6 826.5,362.8 822.5,373.5 818.5,373.5" fill="#7a7a7a" stroke="#dcdcdc" stroke-width="0.8" stroke-linejoin="round" /><polygon points="438.4,399.5 456.4,398.0 456.4,563.5 438.4,564.0" fill="url(#gStf)" stroke-linejoin="round" /><polygon points="428.6,404.4 438.4,404.4 438.4,551.6 428.6,551.6" fill="#a3a3a3" stroke="#dcdcdc" stroke-width="0.8" stroke-linejoin="round" /><polygon points="456.4,397.5 463.6,397.2 463.6,563.2 456.4,563.5" fill="#727272" stroke="#dcdcdc" stroke-width="0.8" stroke-linejoin="round" /><polyline points="438.4,404.4 441.0,399.5 456.4,398.5" fill="none" stroke="#dcdcdc" stroke-width="0.7" /><polyline points="438.4,551.6 441.0,560.0 456.4,560.0" fill="none" stroke="#dcdcdc" stroke-width="0.7" /><polygon points="441.0,560.0 456.4,560.0 456.4,563.3 443.0,563.6" fill="#b5b5b5" stroke="#dcdcdc" stroke-width="0.6" stroke-linejoin="round" /><polygon points="861.5,416.5 864.5,406.2 871.0,406.2 874.0,416.5 871.0,426.8 864.5,426.8" fill="#adadad" stroke="#dcdcdc" stroke-width="0.9" stroke-linejoin="round" /><polygon points="871.0,406.2 876.5,407.0 879.5,416.5 874.0,416.5" fill="#707070" stroke="#dcdcdc" stroke-width="0.8" stroke-linejoin="round" /><polygon points="874.0,416.5 879.5,416.5 876.5,426.0 871.0,426.8" fill="#4b4b4b" stroke="#dcdcdc" stroke-width="0.8" stroke-linejoin="round" /><polygon points="861.5,507.0 864.5,496.7 871.0,496.7 874.0,507.0 871.0,517.3 864.5,517.3" fill="#adadad" stroke="#dcdcdc" stroke-width="0.9" stroke-linejoin="round" /><polygon points="871.0,496.7 876.5,497.5 879.5,507.0 874.0,507.0" fill="#707070" stroke="#dcdcdc" stroke-width="0.8" stroke-linejoin="round" /><polygon points="874.0,507.0 879.5,507.0 876.5,516.5 871.0,517.3" fill="#4b4b4b" stroke="#dcdcdc" stroke-width="0.8" stroke-linejoin="round" /><polygon points="861.5,640.0 864.5,629.7 871.0,629.7 874.0,640.0 871.0,650.3 864.5,650.3" fill="#adadad" stroke="#dcdcdc" stroke-width="0.9" stroke-linejoin="round" /><polygon points="871.0,629.7 876.5,630.5 879.5,640.0 874.0,640.0" fill="#707070" stroke="#dcdcdc" stroke-width="0.8" stroke-linejoin="round" /><polygon points="874.0,640.0 879.5,640.0 876.5,649.5 871.0,650.3" fill="#4b4b4b" stroke="#dcdcdc" stroke-width="0.8" stroke-linejoin="round" /><polygon points="861.5,706.0 864.5,695.7 871.0,695.7 874.0,706.0 871.0,716.3 864.5,716.3" fill="#adadad" stroke="#dcdcdc" stroke-width="0.9" stroke-linejoin="round" /><polygon points="871.0,695.7 876.5,696.5 879.5,706.0 874.0,706.0" fill="#707070" stroke="#dcdcdc" stroke-width="0.8" stroke-linejoin="round" /><polygon points="874.0,706.0 879.5,706.0 876.5,715.5 871.0,716.3" fill="#4b4b4b" stroke="#dcdcdc" stroke-width="0.8" stroke-linejoin="round" /><polygon points="861.5,772.0 864.5,761.7 871.0,761.7 874.0,772.0 871.0,782.3 864.5,782.3" fill="#adadad" stroke="#dcdcdc" stroke-width="0.9" stroke-linejoin="round" /><polygon points="871.0,761.7 876.5,762.5 879.5,772.0 874.0,772.0" fill="#707070" stroke="#dcdcdc" stroke-width="0.8" stroke-linejoin="round" /><polygon points="874.0,772.0 879.5,772.0 876.5,781.5 871.0,782.3" fill="#4b4b4b" stroke="#dcdcdc" stroke-width="0.8" stroke-linejoin="round" /><polyline points="104.0,487.0 241.0,483.3" fill="none" stroke="#7fb2ea" stroke-width="0.9" stroke-dasharray="9 3 2 3"/><polyline points="1045.0,430.5 1128.0,436.0" fill="none" stroke="#7fb2ea" stroke-width="0.9" stroke-dasharray="9 3 2 3"/></svg>
<div class="abs" style="left:1416px;top:274px;width:9px;height:880px;background:#f0f0f0"></div>
<div class="abs" style="left:1416px;top:274px;width:9px;height:606px;background:#cdcdcd"></div>
<svg style="left:0;top:0" width="1440" height="1170" viewBox="0 0 1440 1170"><path d="M1237.3 282.2V288.2H1231.3Z" fill="#555"/><path d="M1257.5 304.0V310.0H1251.5Z" fill="#555"/><path d="M1257.5 392.0V398.0H1251.5Z" fill="#555"/><path d="M1257.5 480.0V486.0H1251.5Z" fill="#555"/><path d="M1264 406H1401L1416 416.5L1401 427H1264Z" fill="#f26e21"/><rect x="1270.2" y="324.7" width="10.4" height="10.4" rx="1.8" fill="#e3e3e3"/><path d="M1272.2 329.5L1274.9 332.9L1281.0 323.1" stroke="#b9b9b9" stroke-width="2.1" fill="none"/><rect x="1270.2" y="346.7" width="10.4" height="10.4" rx="1.8" fill="#e3e3e3"/><path d="M1272.2 351.5L1274.9 354.9L1281.0 345.1" stroke="#b9b9b9" stroke-width="2.1" fill="none"/><rect x="1270.2" y="368.7" width="10.4" height="10.4" rx="1.8" fill="#e3e3e3"/><path d="M1272.2 373.5L1274.9 376.9L1281.0 367.1" stroke="#b9b9b9" stroke-width="2.1" fill="none"/><rect x="1270.2" y="412.2" width="10.4" height="10.4" rx="1.8" fill="#e3e3e3"/><path d="M1272.2 417.0L1274.9 420.4L1281.0 410.6" stroke="#f98a1c" stroke-width="2.1" fill="none"/><rect x="1270.2" y="434.2" width="10.4" height="10.4" rx="1.8" fill="#e3e3e3"/><path d="M1272.2 439.0L1274.9 442.4L1281.0 432.6" stroke="#f98a1c" stroke-width="2.1" fill="none"/><rect x="1270.2" y="456.2" width="10.4" height="10.4" rx="1.8" fill="#e3e3e3"/><path d="M1272.2 461.0L1274.9 464.4L1281.0 454.6" stroke="#f98a1c" stroke-width="2.1" fill="none"/><rect x="1270.2" y="500.2" width="10.4" height="10.4" rx="1.8" fill="#e3e3e3"/><path d="M1272.2 505.0L1274.9 508.4L1281.0 498.6" stroke="#f98a1c" stroke-width="2.1" fill="none"/><rect x="1270.2" y="522.2" width="10.4" height="10.4" rx="1.8" fill="#e3e3e3"/><path d="M1272.2 527.0L1274.9 530.4L1281.0 520.6" stroke="#f98a1c" stroke-width="2.1" fill="none"/><rect x="1270.2" y="544.2" width="10.4" height="10.4" rx="1.8" fill="#e3e3e3"/><path d="M1272.2 549.0L1274.9 552.4L1281.0 542.6" stroke="#f98a1c" stroke-width="2.1" fill="none"/><rect x="1270.2" y="566.2" width="10.4" height="10.4" rx="1.8" fill="#e3e3e3"/><path d="M1272.2 571.0L1274.9 574.4L1281.0 564.6" stroke="#f98a1c" stroke-width="2.1" fill="none"/><rect x="1270.2" y="588.2" width="10.4" height="10.4" rx="1.8" fill="#e3e3e3"/><path d="M1272.2 593.0L1274.9 596.4L1281.0 586.6" stroke="#f98a1c" stroke-width="2.1" fill="none"/><rect x="1270.2" y="610.2" width="10.4" height="10.4" rx="1.8" fill="#e3e3e3"/><path d="M1272.2 615.0L1274.9 618.4L1281.0 608.6" stroke="#f98a1c" stroke-width="2.1" fill="none"/><rect x="1270.2" y="632.2" width="10.4" height="10.4" rx="1.8" fill="#e3e3e3"/><path d="M1272.2 637.0L1274.9 640.4L1281.0 630.6" stroke="#f98a1c" stroke-width="2.1" fill="none"/><rect x="1270.2" y="654.2" width="10.4" height="10.4" rx="1.8" fill="#e3e3e3"/><path d="M1272.2 659.0L1274.9 662.4L1281.0 652.6" stroke="#f98a1c" stroke-width="2.1" fill="none"/><rect x="1270.2" y="676.2" width="10.4" height="10.4" rx="1.8" fill="#e3e3e3"/><path d="M1272.2 681.0L1274.9 684.4L1281.0 674.6" stroke="#f98a1c" stroke-width="2.1" fill="none"/><rect x="1270.2" y="698.2" width="10.4" height="10.4" rx="1.8" fill="#e3e3e3"/><path d="M1272.2 703.0L1274.9 706.4L1281.0 696.6" stroke="#f98a1c" stroke-width="2.1" fill="none"/><rect x="1270.2" y="720.2" width="10.4" height="10.4" rx="1.8" fill="#e3e3e3"/><path d="M1272.2 725.0L1274.9 728.4L1281.0 718.6" stroke="#f98a1c" stroke-width="2.1" fill="none"/><rect x="1270.2" y="742.2" width="10.4" height="10.4" rx="1.8" fill="#e3e3e3"/><path d="M1272.2 747.0L1274.9 750.4L1281.0 740.6" stroke="#f98a1c" stroke-width="2.1" fill="none"/><rect x="1270.2" y="764.2" width="10.4" height="10.4" rx="1.8" fill="#e3e3e3"/><path d="M1272.2 769.0L1274.9 772.4L1281.0 762.6" stroke="#f98a1c" stroke-width="2.1" fill="none"/><rect x="1270.2" y="786.2" width="10.4" height="10.4" rx="1.8" fill="#e3e3e3"/><path d="M1272.2 791.0L1274.9 794.4L1281.0 784.6" stroke="#f98a1c" stroke-width="2.1" fill="none"/><rect x="1270.2" y="808.2" width="10.4" height="10.4" rx="1.8" fill="#e3e3e3"/><path d="M1272.2 813.0L1274.9 816.4L1281.0 806.6" stroke="#f98a1c" stroke-width="2.1" fill="none"/><rect x="1270.2" y="830.2" width="10.4" height="10.4" rx="1.8" fill="#e3e3e3"/><path d="M1272.2 835.0L1274.9 838.4L1281.0 828.6" stroke="#f98a1c" stroke-width="2.1" fill="none"/><rect x="1270.2" y="852.2" width="10.4" height="10.4" rx="1.8" fill="#e3e3e3"/><path d="M1272.2 857.0L1274.9 860.4L1281.0 850.6" stroke="#f98a1c" stroke-width="2.1" fill="none"/><rect x="1270.2" y="874.2" width="10.4" height="10.4" rx="1.8" fill="#e3e3e3"/><path d="M1272.2 879.0L1274.9 882.4L1281.0 872.6" stroke="#f98a1c" stroke-width="2.1" fill="none"/><rect x="1270.2" y="896.2" width="10.4" height="10.4" rx="1.8" fill="#e3e3e3"/><path d="M1272.2 901.0L1274.9 904.4L1281.0 894.6" stroke="#f98a1c" stroke-width="2.1" fill="none"/><rect x="1270.2" y="918.2" width="10.4" height="10.4" rx="1.8" fill="#e3e3e3"/><path d="M1272.2 923.0L1274.9 926.4L1281.0 916.6" stroke="#f98a1c" stroke-width="2.1" fill="none"/><rect x="1270.2" y="940.2" width="10.4" height="10.4" rx="1.8" fill="#e3e3e3"/><path d="M1272.2 945.0L1274.9 948.4L1281.0 938.6" stroke="#f98a1c" stroke-width="2.1" fill="none"/><rect x="1270.2" y="962.2" width="10.4" height="10.4" rx="1.8" fill="#e3e3e3"/><path d="M1272.2 967.0L1274.9 970.4L1281.0 960.6" stroke="#f98a1c" stroke-width="2.1" fill="none"/><rect x="1270.2" y="984.2" width="10.4" height="10.4" rx="1.8" fill="#e3e3e3"/><path d="M1272.2 989.0L1274.9 992.4L1281.0 982.6" stroke="#f98a1c" stroke-width="2.1" fill="none"/><rect x="1270.2" y="1006.2" width="10.4" height="10.4" rx="1.8" fill="#e3e3e3"/><path d="M1272.2 1011.0L1274.9 1014.4L1281.0 1004.6" stroke="#f98a1c" stroke-width="2.1" fill="none"/><rect x="1270.2" y="1028.2" width="10.4" height="10.4" rx="1.8" fill="#e3e3e3"/><path d="M1272.2 1033.0L1274.9 1036.4L1281.0 1026.6" stroke="#f98a1c" stroke-width="2.1" fill="none"/><rect x="1270.2" y="1050.2" width="10.4" height="10.4" rx="1.8" fill="#e3e3e3"/><path d="M1272.2 1055.0L1274.9 1058.4L1281.0 1048.6" stroke="#f98a1c" stroke-width="2.1" fill="none"/><rect x="1270.2" y="1072.2" width="10.4" height="10.4" rx="1.8" fill="#e3e3e3"/><path d="M1272.2 1077.0L1274.9 1080.4L1281.0 1070.6" stroke="#f98a1c" stroke-width="2.1" fill="none"/><rect x="1270.2" y="1094.2" width="10.4" height="10.4" rx="1.8" fill="#e3e3e3"/><path d="M1272.2 1099.0L1274.9 1102.4L1281.0 1092.6" stroke="#f98a1c" stroke-width="2.1" fill="none"/><rect x="1270.2" y="1116.2" width="10.4" height="10.4" rx="1.8" fill="#e3e3e3"/><path d="M1272.2 1121.0L1274.9 1124.4L1281.0 1114.6" stroke="#f98a1c" stroke-width="2.1" fill="none"/><rect x="1270.2" y="1138.2" width="10.4" height="10.4" rx="1.8" fill="#e3e3e3"/><path d="M1272.2 1143.0L1274.9 1146.4L1281.0 1136.6" stroke="#f98a1c" stroke-width="2.1" fill="none"/></svg>
<span class="t" style="left:1249.34px;top:277.00px;font-size:12px;line-height:15px;transform:scaleX(0.9547);transform-origin:0 0;font-weight:700;color:#444;">C 99</span>
<span class="t" style="left:1270.04px;top:299.00px;font-size:12px;line-height:15px;letter-spacing:-0.055px;font-weight:700;color:#3c3c3c;">Members</span>
<span class="t" style="left:1270.04px;top:387.00px;font-size:12px;line-height:15px;transform:scaleX(0.9564);transform-origin:0 0;font-weight:700;color:#3c3c3c;">Load effects</span>
<span class="t" style="left:1270.04px;top:475.00px;font-size:12px;line-height:15px;letter-spacing:-0.205px;font-weight:700;color:#3c3c3c;">Operations</span>
<span class="t" style="left:1291.64px;top:323.00px;font-size:12px;line-height:15px;letter-spacing:-0.027px;color:#3c3c3c;text-decoration:underline;">Member 7</span>
<span class="t" style="left:1291.64px;top:345.00px;font-size:12px;line-height:15px;letter-spacing:-0.010px;color:#3c3c3c;">Member 14</span>
<span class="t" style="left:1291.64px;top:367.00px;font-size:12px;line-height:15px;letter-spacing:-0.010px;color:#3c3c3c;">Member 21</span>
<span class="t" style="left:1291.64px;top:411.00px;font-size:12px;line-height:15px;transform:scaleX(0.8934);transform-origin:0 0;color:#fff;">ULS 1(1)</span>
<span class="t" style="left:1291.64px;top:433.00px;font-size:12px;line-height:15px;transform:scaleX(0.8934);transform-origin:0 0;color:#3c3c3c;">ULS 3(2)</span>
<span class="t" style="left:1291.64px;top:455.00px;font-size:12px;line-height:15px;transform:scaleX(0.8934);transform-origin:0 0;color:#3c3c3c;">ULS 2(3)</span>
<span class="t" style="left:1291.64px;top:499.00px;font-size:12px;line-height:15px;letter-spacing:-0.167px;color:#3c3c3c;">Work plane 1</span>
<span class="t" style="left:1291.64px;top:521.00px;font-size:12px;line-height:15px;transform:scaleX(0.9170);transform-origin:0 0;color:#3c3c3c;">Cut 1</span>
<span class="t" style="left:1291.64px;top:543.00px;font-size:12px;line-height:15px;letter-spacing:-0.083px;color:#3c3c3c;">Work plane 2</span>
<span class="t" style="left:1291.64px;top:565.00px;font-size:12px;line-height:15px;transform:scaleX(0.9518);transform-origin:0 0;color:#3c3c3c;">Cut 2</span>
<span class="t" style="left:1291.64px;top:587.00px;font-size:12px;line-height:15px;letter-spacing:-0.083px;color:#3c3c3c;">Work plane 3</span>
<span class="t" style="left:1291.64px;top:609.00px;font-size:12px;line-height:15px;transform:scaleX(0.9518);transform-origin:0 0;color:#3c3c3c;">Cut 3</span>
<span class="t" style="left:1291.64px;top:631.00px;font-size:12px;line-height:15px;letter-spacing:-0.020px;color:#3c3c3c;">Stiffening member 1</span>
<span class="t" style="left:1291.64px;top:653.00px;font-size:12px;line-height:15px;letter-spacing:0.032px;color:#3c3c3c;">Stiffening member 2</span>
<span class="t" style="left:1291.64px;top:675.00px;font-size:12px;line-height:15px;transform:scaleX(0.9181);transform-origin:0 0;color:#3c3c3c;">Plate 1</span>
<span class="t" style="left:1291.64px;top:697.00px;font-size:12px;line-height:15px;transform:scaleX(0.9449);transform-origin:0 0;color:#3c3c3c;">Plate 2</span>
<span class="t" style="left:1291.64px;top:719.00px;font-size:12px;line-height:15px;transform:scaleX(0.9449);transform-origin:0 0;color:#3c3c3c;">Plate 3</span>
<span class="t" style="left:1291.64px;top:741.00px;font-size:12px;line-height:15px;transform:scaleX(0.9502);transform-origin:0 0;color:#3c3c3c;">Plate 4</span>
<span class="t" style="left:1291.64px;top:763.00px;font-size:12px;line-height:15px;transform:scaleX(0.9449);transform-origin:0 0;color:#3c3c3c;">Plate 5</span>
<span class="t" style="left:1291.64px;top:785.00px;font-size:12px;line-height:15px;transform:scaleX(0.9449);transform-origin:0 0;color:#3c3c3c;">Plate 6</span>
<span class="t" style="left:1291.64px;top:807.00px;font-size:12px;line-height:15px;transform:scaleX(0.9449);transform-origin:0 0;color:#3c3c3c;">Plate 7</span>
<span class="t" style="left:1291.64px;top:829.00px;font-size:12px;line-height:15px;transform:scaleX(0.9449);transform-origin:0 0;color:#3c3c3c;">Plate 8</span>
<span class="t" style="left:1291.64px;top:851.00px;font-size:12px;line-height:15px;transform:scaleX(0.9449);transform-origin:0 0;color:#3c3c3c;">Plate 9</span>
<span class="t" style="left:1291.64px;top:873.00px;font-size:12px;line-height:15px;transform:scaleX(0.9541);transform-origin:0 0;color:#3c3c3c;">Bolts 1</span>
<span class="t" style="left:1291.64px;top:895.00px;font-size:12px;line-height:15px;letter-spacing:-0.127px;color:#3c3c3c;">Bolts 2</span>
<span class="t" style="left:1291.64px;top:917.00px;font-size:12px;line-height:15px;letter-spacing:-0.127px;color:#3c3c3c;">Bolts 3</span>
<span class="t" style="left:1291.64px;top:939.00px;font-size:12px;line-height:15px;letter-spacing:-0.098px;color:#3c3c3c;">Bolts 4</span>
<span class="t" style="left:1291.64px;top:961.00px;font-size:12px;line-height:15px;letter-spacing:-0.127px;color:#3c3c3c;">Bolts 5</span>
<span class="t" style="left:1291.64px;top:983.00px;font-size:12px;line-height:15px;transform:scaleX(0.9505);transform-origin:0 0;color:#3c3c3c;">Weld 1</span>
<span class="t" style="left:1291.64px;top:1005.00px;font-size:12px;line-height:15px;letter-spacing:-0.141px;color:#3c3c3c;">Weld 2</span>
<span class="t" style="left:1291.64px;top:1027.00px;font-size:12px;line-height:15px;letter-spacing:-0.141px;color:#3c3c3c;">Weld 3</span>
<span class="t" style="left:1291.64px;top:1049.00px;font-size:12px;line-height:15px;letter-spacing:-0.091px;color:#3c3c3c;">Weld 4</span>
<span class="t" style="left:1291.64px;top:1071.00px;font-size:12px;line-height:15px;letter-spacing:-0.141px;color:#3c3c3c;">Weld 5</span>
<span class="t" style="left:1291.64px;top:1093.00px;font-size:12px;line-height:15px;letter-spacing:-0.141px;color:#3c3c3c;">Weld 6</span>
<span class="t" style="left:1291.64px;top:1115.00px;font-size:12px;line-height:15px;letter-spacing:-0.141px;color:#3c3c3c;">Weld 7</span>
<span class="t" style="left:1291.64px;top:1137.00px;font-size:12px;line-height:15px;letter-spacing:-0.141px;color:#3c3c3c;">Weld 8</span>
<div class="abs" style="left:1445px;top:141px;width:1474px;height:1026px;width:474px;background:#fff"></div>
<div class="abs" style="left:1445px;top:141px;width:474px;height:25px;background:#f26e21"></div>
<span class="t" style="left:1455.11px;top:146.00px;font-size:12.5px;line-height:16px;transform:scaleX(0.9063);transform-origin:0 0;font-weight:700;color:#fff;">ULS 1(1)</span>
<span class="t" style="left:1511.84px;top:147.00px;font-size:12px;line-height:15px;letter-spacing:-0.098px;color:#fff;">[ Load ]</span>
<span class="t" style="left:1833.56px;top:146.00px;font-size:12.5px;line-height:16px;transform:scaleX(0.8480);transform-origin:0 0;font-weight:700;color:#fff;">Copy</span>
<span class="t" style="left:1871.06px;top:146.00px;font-size:12.5px;line-height:16px;letter-spacing:-0.086px;font-weight:700;color:#fff;">Delete</span>
<div class="abs" style="left:1455px;top:176px;width:435px;height:124px;background:#fff;border:1px solid #a3a3a3"></div><div class="abs" style="left:1456px;top:177px;width:433px;height:33px;background:#f1f1f1"></div><div class="abs" style="left:1484px;top:177px;width:1px;height:121px;background:#a3a3a3"></div><div class="abs" style="left:1587px;top:177px;width:1px;height:121px;background:#a3a3a3"></div><div class="abs" style="left:1637px;top:177px;width:1px;height:121px;background:#a3a3a3"></div><div class="abs" style="left:1687px;top:177px;width:1px;height:121px;background:#a3a3a3"></div><div class="abs" style="left:1737px;top:177px;width:1px;height:121px;background:#a3a3a3"></div><div class="abs" style="left:1787px;top:177px;width:1px;height:121px;background:#a3a3a3"></div><div class="abs" style="left:1837px;top:177px;width:1px;height:121px;background:#a3a3a3"></div><div class="abs" style="left:1888px;top:177px;width:1px;height:121px;background:#a3a3a3"></div><div class="abs" style="left:1456px;top:210px;width:433px;height:1px;background:#a3a3a3"></div><div class="abs" style="left:1456px;top:239px;width:433px;height:1px;background:#a3a3a3"></div><div class="abs" style="left:1456px;top:268px;width:433px;height:1px;background:#a3a3a3"></div><div class="abs" style="left:1456px;top:297px;width:433px;height:1px;background:#a3a3a3"></div>
<span class="t" style="left:1488.84px;top:188.00px;font-size:12px;line-height:15px;letter-spacing:0.206px;font-weight:700;color:#333;">Member</span>
<span class="t" style="left:1591.84px;top:180.00px;font-size:12px;line-height:15px;transform:scaleX(1.0385);transform-origin:0 0;font-weight:700;color:#333;">N</span>
<span class="t" style="left:1591.84px;top:195.00px;font-size:12px;line-height:15px;letter-spacing:-0.083px;font-weight:700;color:#333;">[kN]</span>
<span class="t" style="left:1641.84px;top:180.00px;font-size:12px;line-height:15px;transform:scaleX(0.9198);transform-origin:0 0;font-weight:700;color:#333;">Vy</span>
<span class="t" style="left:1641.84px;top:195.00px;font-size:12px;line-height:15px;letter-spacing:-0.083px;font-weight:700;color:#333;">[kN]</span>
<span class="t" style="left:1691.84px;top:180.00px;font-size:12px;line-height:15px;transform:scaleX(0.9640);transform-origin:0 0;font-weight:700;color:#333;">Vz</span>
<span class="t" style="left:1691.84px;top:195.00px;font-size:12px;line-height:15px;letter-spacing:-0.083px;font-weight:700;color:#333;">[kN]</span>
<span class="t" style="left:1741.84px;top:180.00px;font-size:12px;line-height:15px;transform:scaleX(1.0498);transform-origin:0 0;font-weight:700;color:#333;">Mx</span>
<span class="t" style="left:1741.84px;top:195.00px;font-size:12px;line-height:15px;letter-spacing:0.050px;font-weight:700;color:#333;">[kNm]</span>
<span class="t" style="left:1791.84px;top:180.00px;font-size:12px;line-height:15px;transform:scaleX(1.0498);transform-origin:0 0;font-weight:700;color:#333;">My</span>
<span class="t" style="left:1791.84px;top:195.00px;font-size:12px;line-height:15px;letter-spacing:0.050px;font-weight:700;color:#333;">[kNm]</span>
<span class="t" style="left:1841.84px;top:180.00px;font-size:12px;line-height:15px;transform:scaleX(1.0628);transform-origin:0 0;font-weight:700;color:#333;">Mz</span>
<span class="t" style="left:1841.84px;top:195.00px;font-size:12px;line-height:15px;letter-spacing:0.050px;font-weight:700;color:#333;">[kNm]</span>
<span class="t" style="left:1488.84px;top:219.00px;font-size:12px;line-height:15px;letter-spacing:-0.029px;color:#333;">Member 7 / Begin</span>
<span class="t" style="left:1591.34px;top:219.00px;font-size:12px;line-height:15px;transform:scaleX(0.8991);transform-origin:0 0;color:#333;">49.9</span>
<span class="t" style="left:1641.34px;top:219.00px;font-size:12px;line-height:15px;transform:scaleX(0.8992);transform-origin:0 0;color:#333;">0.0</span>
<span class="t" style="left:1691.84px;top:219.00px;font-size:12px;line-height:15px;transform:scaleX(0.9310);transform-origin:0 0;color:#333;">-4.2</span>
<span class="t" style="left:1741.34px;top:219.00px;font-size:12px;line-height:15px;transform:scaleX(0.8992);transform-origin:0 0;color:#333;">0.0</span>
<span class="t" style="left:1791.84px;top:219.00px;font-size:12px;line-height:15px;transform:scaleX(0.9323);transform-origin:0 0;color:#333;">-10.8</span>
<span class="t" style="left:1841.34px;top:219.00px;font-size:12px;line-height:15px;transform:scaleX(0.8992);transform-origin:0 0;color:#333;">0.0</span>
<span class="t" style="left:1488.84px;top:248.00px;font-size:12px;line-height:15px;letter-spacing:-0.153px;color:#333;">Member 21 / End</span>
<span class="t" style="left:1591.34px;top:248.00px;font-size:12px;line-height:15px;transform:scaleX(0.8842);transform-origin:0 0;color:#333;">4.2</span>
<span class="t" style="left:1641.34px;top:248.00px;font-size:12px;line-height:15px;transform:scaleX(0.8992);transform-origin:0 0;color:#333;">0.0</span>
<span class="t" style="left:1691.34px;top:248.00px;font-size:12px;line-height:15px;transform:scaleX(0.8777);transform-origin:0 0;color:#333;">20.1</span>
<span class="t" style="left:1741.34px;top:248.00px;font-size:12px;line-height:15px;transform:scaleX(0.8992);transform-origin:0 0;color:#333;">0.0</span>
<span class="t" style="left:1791.34px;top:248.00px;font-size:12px;line-height:15px;transform:scaleX(0.8991);transform-origin:0 0;color:#333;">10.8</span>
<span class="t" style="left:1841.34px;top:248.00px;font-size:12px;line-height:15px;transform:scaleX(0.8992);transform-origin:0 0;color:#333;">0.0</span>
<span class="t" style="left:1488.84px;top:277.00px;font-size:12px;line-height:15px;letter-spacing:-0.153px;color:#333;">Member 14 / End</span>
<span class="t" style="left:1591.34px;top:277.00px;font-size:12px;line-height:15px;transform:scaleX(0.8992);transform-origin:0 0;color:#333;">0.0</span>
<span class="t" style="left:1641.34px;top:277.00px;font-size:12px;line-height:15px;transform:scaleX(0.8992);transform-origin:0 0;color:#333;">0.0</span>
<span class="t" style="left:1691.34px;top:277.00px;font-size:12px;line-height:15px;transform:scaleX(0.8991);transform-origin:0 0;color:#333;">29.8</span>
<span class="t" style="left:1741.34px;top:277.00px;font-size:12px;line-height:15px;transform:scaleX(0.8992);transform-origin:0 0;color:#333;">0.0</span>
<span class="t" style="left:1791.34px;top:277.00px;font-size:12px;line-height:15px;transform:scaleX(0.8992);transform-origin:0 0;color:#333;">0.0</span>
<span class="t" style="left:1841.34px;top:277.00px;font-size:12px;line-height:15px;transform:scaleX(0.8992);transform-origin:0 0;color:#333;">0.0</span>
<span class="t" style="left:1454.84px;top:315.00px;font-size:12px;line-height:15px;letter-spacing:-0.161px;color:#333;">Values in disabled cells are not taken into account in CBFEM</span>
<span class="t" style="left:1454.84px;top:330.00px;font-size:12px;line-height:15px;letter-spacing:-0.039px;color:#333;">analysis. Members can be loaded only by that components of</span>
<span class="t" style="left:1454.84px;top:345.00px;font-size:12px;line-height:15px;letter-spacing:0.028px;color:#333;">internal forces which are defined in member &quot;Model type&quot;.</span>
<span class="t" style="left:1454.79px;top:1076.00px;font-size:13px;line-height:16px;transform:scaleX(1.0596);transform-origin:0 0;font-weight:700;color:#333;">Unbalanced forces</span>
<div class="abs" style="left:1455px;top:1092px;width:333px;height:65px;background:#fff;border:1px solid #a3a3a3"></div><div class="abs" style="left:1456px;top:1093px;width:331px;height:33px;background:#f1f1f1"></div><div class="abs" style="left:1510px;top:1093px;width:1px;height:63px;background:#a3a3a3"></div><div class="abs" style="left:1565px;top:1093px;width:1px;height:63px;background:#a3a3a3"></div><div class="abs" style="left:1620px;top:1093px;width:1px;height:63px;background:#a3a3a3"></div><div class="abs" style="left:1675px;top:1093px;width:1px;height:63px;background:#a3a3a3"></div><div class="abs" style="left:1730px;top:1093px;width:1px;height:63px;background:#a3a3a3"></div><div class="abs" style="left:1786px;top:1093px;width:1px;height:63px;background:#a3a3a3"></div><div class="abs" style="left:1456px;top:1126px;width:331px;height:1px;background:#a3a3a3"></div><div class="abs" style="left:1456px;top:1155px;width:331px;height:1px;background:#a3a3a3"></div>
<span class="t" style="left:1459.84px;top:1096.00px;font-size:12px;line-height:15px;letter-spacing:-0.004px;font-weight:700;color:#333;">X</span>
<span class="t" style="left:1459.84px;top:1111.00px;font-size:12px;line-height:15px;letter-spacing:-0.083px;font-weight:700;color:#333;">[kN]</span>
<span class="t" style="left:1514.84px;top:1096.00px;font-size:12px;line-height:15px;transform:scaleX(0.9370);transform-origin:0 0;font-weight:700;color:#333;">Y</span>
<span class="t" style="left:1514.84px;top:1111.00px;font-size:12px;line-height:15px;letter-spacing:-0.083px;font-weight:700;color:#333;">[kN]</span>
<span class="t" style="left:1569.84px;top:1096.00px;font-size:12px;line-height:15px;letter-spacing:0.170px;font-weight:700;color:#333;">Z</span>
<span class="t" style="left:1569.84px;top:1111.00px;font-size:12px;line-height:15px;letter-spacing:-0.083px;font-weight:700;color:#333;">[kN]</span>
<span class="t" style="left:1624.84px;top:1096.00px;font-size:12px;line-height:15px;transform:scaleX(1.0498);transform-origin:0 0;font-weight:700;color:#333;">Mx</span>
<span class="t" style="left:1624.84px;top:1111.00px;font-size:12px;line-height:15px;letter-spacing:0.050px;font-weight:700;color:#333;">[kNm]</span>
<span class="t" style="left:1679.84px;top:1096.00px;font-size:12px;line-height:15px;transform:scaleX(1.0498);transform-origin:0 0;font-weight:700;color:#333;">My</span>
<span class="t" style="left:1679.84px;top:1111.00px;font-size:12px;line-height:15px;letter-spacing:0.050px;font-weight:700;color:#333;">[kNm]</span>
<span class="t" style="left:1734.84px;top:1096.00px;font-size:12px;line-height:15px;transform:scaleX(1.0628);transform-origin:0 0;font-weight:700;color:#333;">Mz</span>
<span class="t" style="left:1734.84px;top:1111.00px;font-size:12px;line-height:15px;letter-spacing:0.050px;font-weight:700;color:#333;">[kNm]</span>
<span class="t" style="left:1459.34px;top:1135.00px;font-size:12px;line-height:15px;transform:scaleX(0.8992);transform-origin:0 0;color:#333;">0.0</span>
<span class="t" style="left:1514.34px;top:1135.00px;font-size:12px;line-height:15px;transform:scaleX(0.8992);transform-origin:0 0;color:#333;">0.0</span>
<span class="t" style="left:1569.34px;top:1135.00px;font-size:12px;line-height:15px;transform:scaleX(0.8992);transform-origin:0 0;color:#333;">0.0</span>
<span class="t" style="left:1624.84px;top:1135.00px;font-size:12px;line-height:15px;transform:scaleX(0.8947);transform-origin:0 0;color:#333;">-0.1</span>
<span class="t" style="left:1679.34px;top:1135.00px;font-size:12px;line-height:15px;transform:scaleX(0.8992);transform-origin:0 0;color:#333;">0.0</span>
<span class="t" style="left:1734.34px;top:1135.00px;font-size:12px;line-height:15px;transform:scaleX(0.8992);transform-origin:0 0;color:#333;">0.0</span>
<div class="abs" style="left:0;top:1167px;width:1920px;height:33px;background:#c5c7c6"></div>
<span class="t" style="left:7.34px;top:1177.00px;font-size:12px;line-height:15px;transform:scaleX(0.9406);transform-origin:0 0;">Design code: EN</span>
<span class="t" style="left:108.34px;top:1177.00px;font-size:12px;line-height:15px;transform:scaleX(0.9368);transform-origin:0 0;">Analysis: Stress, strain</span>
<span class="t" style="left:238.34px;top:1177.00px;font-size:12px;line-height:15px;letter-spacing:0.010px;">Load effects: In equilibrium</span>
<span class="t" style="left:398.34px;top:1177.00px;font-size:12px;line-height:15px;letter-spacing:-0.033px;">Units: mm</span>
</div></body></html>
